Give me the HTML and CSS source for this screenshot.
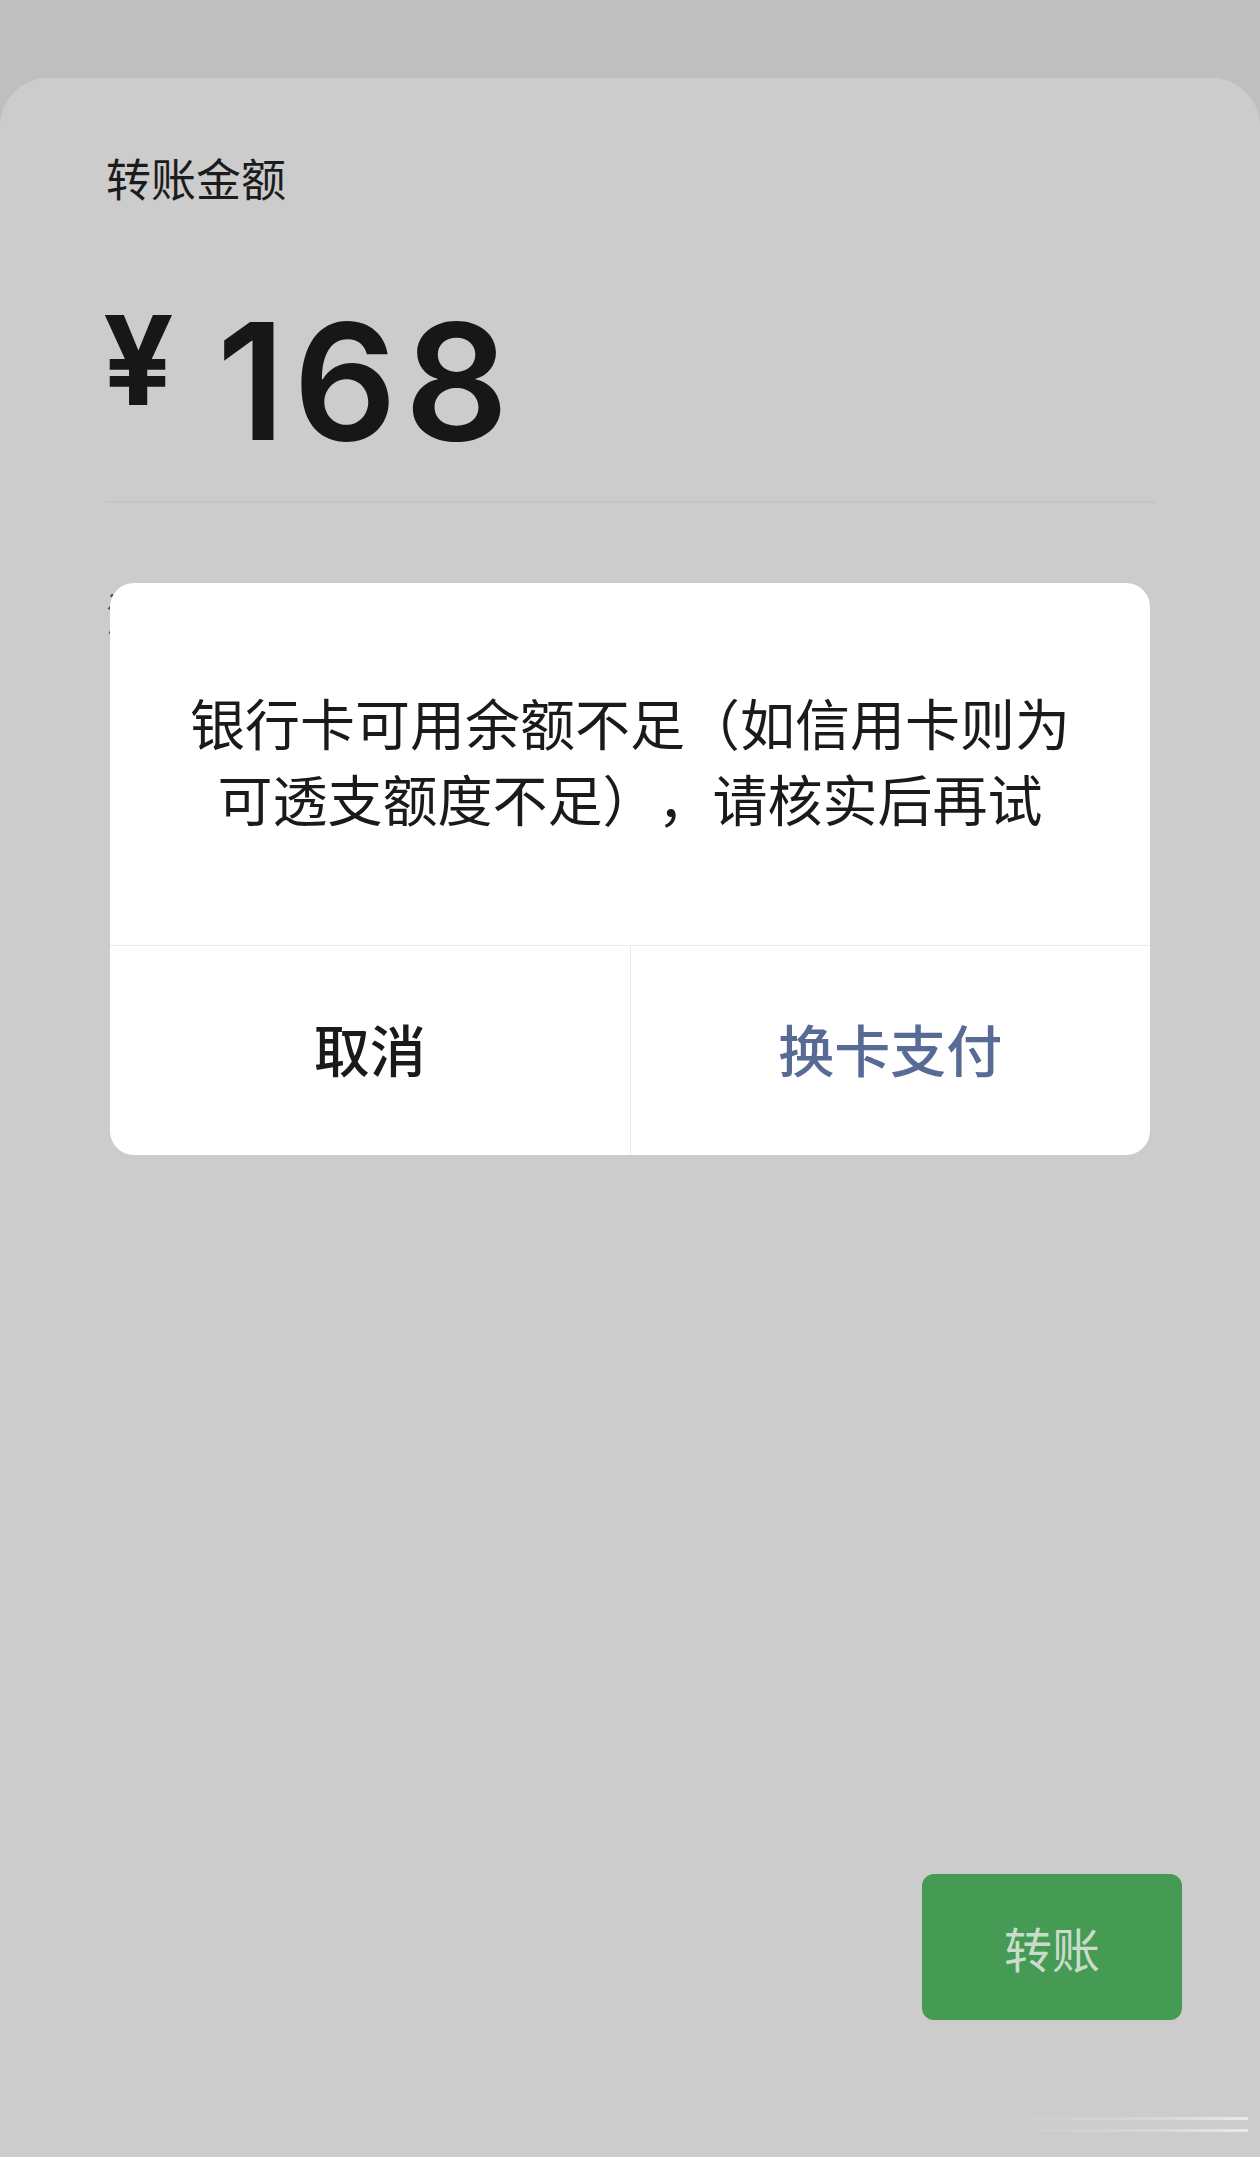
FILE: index.html
```html
<!DOCTYPE html>
<html lang="zh-CN">
<head>
<meta charset="utf-8">
<title>转账</title>
<link rel="stylesheet" href="styles.css">
</head>
<body>
<div class="screen">
  <div class="topbar"></div>
  <div class="card">
    <div class="label">转账金额</div>
    <div class="amount"><span class="yen">¥</span><span class="num">168</span></div>
    <div class="divider"></div>
    <div class="note">添加转账说明</div>
    <div class="actions"><button class="pay">转账</button></div>
    <div class="indicator"><span class="ind-line"></span><span class="ind-line"></span></div>
  </div>
  <div class="dialog">
    <div class="dialog-body">银行卡可用余额不足（如信用卡则为<br>可透支额度不足），请核实后再试</div>
    <div class="dialog-foot">
      <button class="dbtn cancel">取消</button>
      <button class="dbtn confirm">换卡支付</button>
    </div>
  </div>
</div>
</body>
</html>
```
FILE: styles.css
```css
html, body {
  margin: 0;
  padding: 0;
}
body {
  width: 1260px;
  height: 2157px;
  overflow: hidden;
  background: #bfbfbf;
  font-family: "Noto Sans CJK SC", "Noto Sans", sans-serif;
}
.screen {
  position: relative;
  width: 1260px;
  height: 2157px;
  display: flex;
  flex-direction: column;
}
.topbar {
  height: 78px;
  flex: none;
  background: #bfbfbf;
}
.card {
  flex: 1;
  display: flex;
  flex-direction: column;
  background: #cccccc;
  border-radius: 48px 48px 0 0;
  padding: 73px 78px 0 106px;
}
.label {
  font-size: 45px;
  line-height: 54px;
  color: #1c1c1c;
}
.amount {
  display: flex;
  align-items: flex-start;
  margin-top: 95px;
  color: #171717;
  font-family: "Inter", "Roboto", sans-serif;
  line-height: 1;
}
.yen {
  font-size: 124px;
  font-weight: 700;
  margin-top: -2px;
  margin-left: -3px;
}
.num {
  font-size: 162px;
  font-weight: 600;
  margin-left: 43px;
  letter-spacing: 8px;
}
.divider {
  height: 2px;
  background: #c4c4c4;
  margin: 39px 27px 0 -1px;
}
.note {
  margin-top: 83px;
  font-size: 45px;
  line-height: 54px;
  color: #3f4b66;
}
.actions {
  margin-top: auto;
  display: flex;
  justify-content: flex-end;
}
.pay {
  width: 260px;
  height: 146px;
  border: none;
  border-radius: 12px;
  background: #459b54;
  color: #c9dccb;
  font-family: "Noto Sans CJK SC", sans-serif;
  font-size: 48px;
  font-weight: 400;
  padding: 0;
}
.indicator {
  margin: 88px -66px 16px auto;
  width: 240px;
  height: 33px;
  display: flex;
  flex-direction: column;
  justify-content: center;
  gap: 9px;
}
.ind-line {
  display: block;
  height: 3px;
  background: linear-gradient(to right, rgba(255,255,255,0) 0%, rgba(235,235,235,0.35) 60%, rgba(245,245,245,0.7) 100%);
}
.dialog {
  position: absolute;
  left: 110px;
  top: 583px;
  width: 1040px;
  height: 572px;
  background: #ffffff;
  border-radius: 24px;
  display: flex;
  flex-direction: column;
  overflow: hidden;
}
.dialog-body {
  padding: 100px 60px 110px;
  font-size: 55px;
  line-height: 76px;
  text-align: center;
  color: #1a1a1a;
  height: 152px;
  text-spacing-trim: space-all;
  font-feature-settings: "halt" 0, "chws" 0;
}
.dialog-foot {
  flex: 1;
  display: flex;
  border-top: 1px solid #ececec;
}
.dbtn {
  flex: 1;
  border: none;
  background: transparent;
  font-family: "Noto Sans CJK SC", sans-serif;
  font-size: 56px;
  font-weight: 500;
  padding: 0 0 7px;
}
.cancel {
  color: #1a1a1a;
}
.confirm {
  color: #576b95;
  border-left: 1px solid #ececec;
}
```
